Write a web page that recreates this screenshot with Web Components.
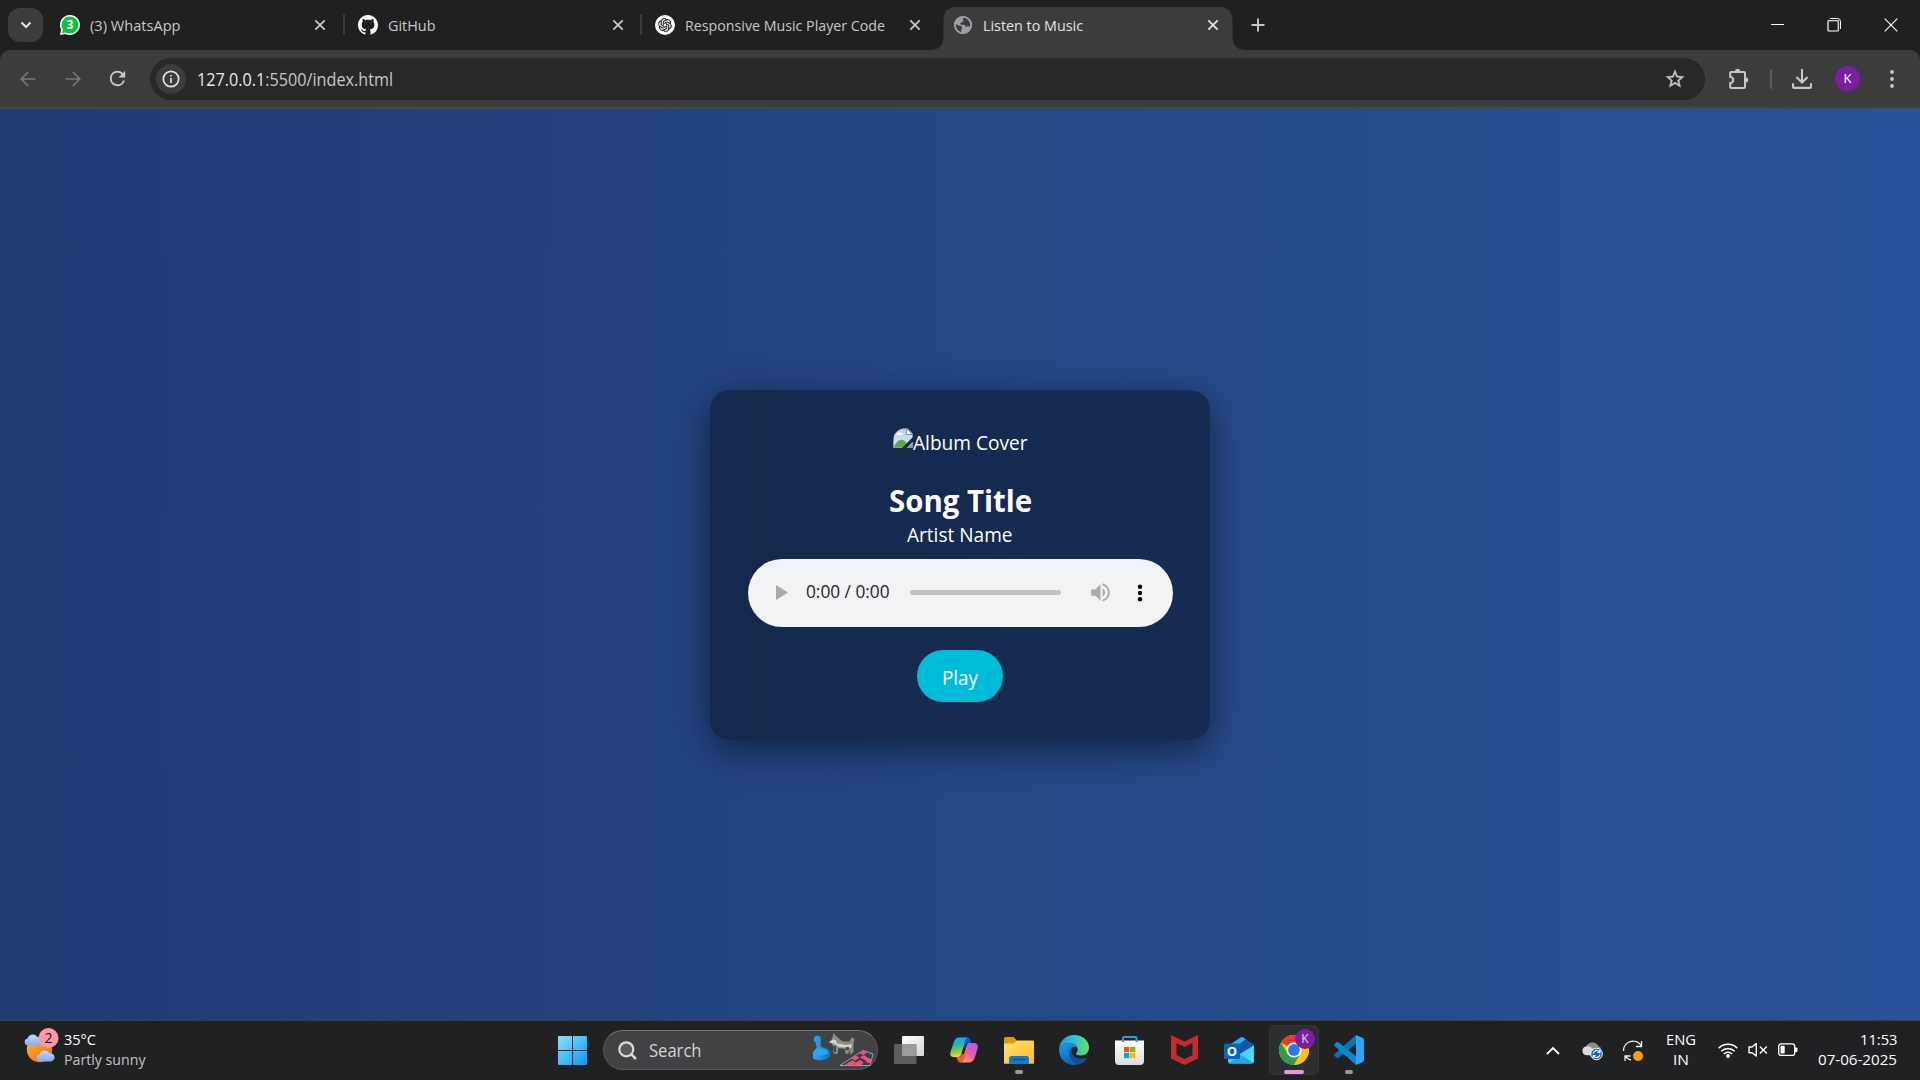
<!DOCTYPE html>
<html lang="en">
<head>
<meta charset="utf-8">
<title>Listen to Music</title>
<style>
html,body{margin:0;height:100%;overflow:hidden}
body{font-family:"Open Sans","Noto Sans",sans-serif;background:#1f2020;color:#fff}
</style>
</head>
<body>
<desktop-screen></desktop-screen>
<script>
const make = (tag, html, Base = HTMLElement) => customElements.define(tag, class extends Base {
  constructor() {
    super();
    this.attachShadow({ mode: 'open' });
    const t = document.createElement('template');
    t.innerHTML = html;
    this.shadowRoot.append(t.content.cloneNode(true));
  }
});

/* A line of text squeezed or stretched to an exact advance width. */
customElements.define('fit-text', class extends HTMLElement {
  constructor() {
    super();
    this.attachShadow({ mode: 'open' }).innerHTML = `<style>
      :host{display:inline-block;white-space:nowrap;flex:none}
      span{display:inline-block;transform-origin:0 50%}</style><span><slot></slot></span>`;
  }
  connectedCallback() {
    const s = this.shadowRoot.querySelector('span');
    const want = +this.getAttribute('w');
    requestAnimationFrame(() => this.fit(s, want));
    this.fit(s, want);
  }
  fit(s, want) {
    this.style.width = want + 'px';
    if (s.offsetWidth) {
      s.style.transform = 'none';
      s.style.transform = `scaleX(${want / s.getBoundingClientRect().width})`;
    }
  }
});

const svg = (w, h, body, vb = `0 0 ${w} ${h}`) => `<svg width="${w}" height="${h}" viewBox="${vb}" fill="none">${body}</svg>`;
const ICONS = {
  chevDown: svg(12, 8, '<path d="M1.500 1.500 6 6l4.500-4.500" stroke="#e3e3e3" stroke-width="2"/>'),
  close: svg(12, 12, '<path d="M1.300 1.300 10.700 10.700M10.700 1.300 1.300 10.700" stroke="currentColor" stroke-width="1.800"/>'),
  plus: svg(14, 14, '<path d="M7 .5v13M.5 7h13" stroke="#c7c7c7" stroke-width="1.900"/>'),
  whatsapp: svg(20, 20, '<path d="M10 0a10 10 0 1 1-4.600 18.900L0 20l1.100-5.300A10 10 0 0 1 10 0z" fill="#fff"/><path d="M10 1.500a8.500 8.500 0 1 1-4.200 15.900L2 18.200l.8-3.700A8.500 8.500 0 0 1 10 1.500z" fill="#12bf41"/><text x="10" y="14.300" font-family="Open Sans" font-weight="700" font-size="12" fill="#fff" text-anchor="middle">3</text>'),
  github: svg(20, 20, '<path fill="#fff" d="M8 0C3.580 0 0 3.580 0 8c0 3.540 2.290 6.530 5.470 7.590.4.07.55-.17.55-.38 0-.19-.01-.82-.01-1.490-2.010.37-2.530-.49-2.690-.94-.09-.23-.48-.94-.82-1.130-.28-.15-.68-.52-.01-.53.63-.01 1.080.58 1.230.82.72 1.210 1.870.87 2.330.66.07-.52.28-.87.51-1.070-1.780-.2-3.640-.89-3.640-3.950 0-.87.31-1.590.82-2.150-.08-.2-.36-1.020.08-2.120 0 0 .67-.21 2.200.82.64-.18 1.320-.27 2-.27s1.360.09 2 .27c1.530-1.040 2.200-.82 2.200-.82.44 1.100.16 1.920.08 2.120.51.56.82 1.270.82 2.150 0 3.070-1.870 3.750-3.650 3.950.29.25.54.73.54 1.480 0 1.070-.01 1.930-.01 2.200 0 .21.15.46.55.38A8.010 8.010 0 0 0 16 8c0-4.420-3.580-8-8-8z"/>', '0 0 16 16'),
  openai: svg(20, 20, '<circle cx="10" cy="10" r="10" fill="#fff"/><g transform="translate(3.200 3.200) scale(.567)"><path fill="#111" stroke="#111" stroke-width=".3" d="M22.2819 9.8211a5.9847 5.9847 0 0 0-.5157-4.9108 6.0462 6.0462 0 0 0-6.5098-2.9A6.0651 6.0651 0 0 0 4.9807 4.1818a5.9847 5.9847 0 0 0-3.9977 2.9 6.0462 6.0462 0 0 0 .7427 7.0966 5.98 5.98 0 0 0 .511 4.9107 6.051 6.051 0 0 0 6.5146 2.9001A5.9847 5.9847 0 0 0 13.2599 24a6.0557 6.0557 0 0 0 5.7718-4.2058 5.9894 5.9894 0 0 0 3.9977-2.9001 6.0557 6.0557 0 0 0-.7475-7.0729zm-9.022 12.6081a4.4755 4.4755 0 0 1-2.8764-1.0408l.1419-.0804 4.7783-2.7582a.7948.7948 0 0 0 .3927-.6813v-6.7369l2.02 1.1686a.071.071 0 0 1 .038.052v5.5826a4.504 4.504 0 0 1-4.4945 4.4944zm-9.6607-4.1254a4.4708 4.4708 0 0 1-.5346-3.0137l.142.0852 4.783 2.7582a.7712.7712 0 0 0 .7806 0l5.8428-3.3685v2.3324a.0804.0804 0 0 1-.0332.0615L9.74 19.9502a4.4992 4.4992 0 0 1-6.1408-1.6464zM2.3408 7.8956a4.485 4.485 0 0 1 2.3655-1.9728V11.6a.7664.7664 0 0 0 .3879.6765l5.8144 3.3543-2.0201 1.1685a.0757.0757 0 0 1-.071 0l-4.8303-2.7865A4.504 4.504 0 0 1 2.3408 7.872zm16.5963 3.8558L13.1038 8.364 15.1192 7.2a.0757.0757 0 0 1 .071 0l4.8303 2.7913a4.4944 4.4944 0 0 1-.6765 8.1042v-5.6772a.79.79 0 0 0-.407-.667zm2.0107-3.0231l-.142-.0852-4.7735-2.7818a.7759.7759 0 0 0-.7854 0L9.409 9.2297V6.8974a.0662.0662 0 0 1 .0284-.0615l4.8303-2.7866a4.4992 4.4992 0 0 1 6.6802 4.66zM8.3065 12.863l-2.02-1.1638a.0804.0804 0 0 1-.038-.0567V6.0742a4.4992 4.4992 0 0 1 7.3757-3.4537l-.142.0805L8.704 5.459a.7948.7948 0 0 0-.3927.6813zm1.0976-2.3654l2.602-1.4998 2.6069 1.4998v2.9994l-2.5974 1.4997-2.6067-1.4997Z"/></g>'),
  globe: svg(20, 20, '<circle cx="10" cy="10" r="9" fill="#9aa0a6"/><path d="M11 2.600c-1.200.6-1.400 1.700-.7 2.500.7.700.3 1.600-.8 1.600-1 0-.9 1-1.700 1.300-1.200.3-.6 1.700.4 1.700h2.600c1 0 1.500.7 1.500 1.500s1 .7 1.600.3c.8-.6 2-.3 3 .2 1-3.600-1-7.800-5.900-9.100z" fill="#3c3c3c"/><path d="M2.700 9.300c1.300.2 2.600 1.300 3.900 1.400 1.600.1 2.500.8 2.500 2 0 1-.9 1.200-.9 2.100v2.400C4.800 16.300 2.500 13 2.700 9.300z" fill="#3c3c3c"/><circle cx="10" cy="10" r="8.200" stroke="#9aa0a6" stroke-width="1.600"/>'),
  min: svg(13, 13, '<path d="M1 5.500h13" stroke="#fff" stroke-width="1"/>'),
  restore: svg(14, 14, '<path d="M3 .5h7.500a3 3 0 0 1 3 3V11" stroke="#fff"/><rect x="1" y="2.500" width="10.500" height="10.500" rx="1" stroke="#fff" stroke-width="1.200"/><path d="M1.500 3H11v9.500" stroke="#999" stroke-width="1"/>'),
  wclose: svg(14, 14, '<path d="M.7.700 13.300 13.300M13.300.7.700 13.300" stroke="#fff" stroke-width="1.100"/>'),
  back: svg(16, 16, '<path d="M15.500 8H1.700M8.200 1 1.200 8l7 7" stroke="#777" stroke-width="1.700"/>'),
  fwd: svg(16, 16, '<path d="M.5 8h13.800M7.800 1l7 7-7 7" stroke="#777" stroke-width="1.700"/>'),
  reload: svg(23, 23, '<path fill="#c7c7c7" d="M17.650 6.350A7.958 7.958 0 0 0 12 4a8 8 0 1 0 7.730 10h-2.080A6 6 0 1 1 12 6c1.660 0 3.140.69 4.220 1.780L13 11h7V4l-2.350 2.350z"/>', '0 0 24 24'),
  info: svg(18, 18, '<circle cx="9" cy="9" r="7.700" stroke="#e3e3e3" stroke-width="1.700"/><path d="M9 8v5" stroke="#e3e3e3" stroke-width="1.700"/><path d="M9 4.900v1.700" stroke="#e3e3e3" stroke-width="1.700"/>'),
  star: svg(22, 22, '<path fill="#c7c7c7" stroke="#c7c7c7" stroke-width=".4" d="M22 9.240l-7.190-.62L12 2 9.190 8.630 2 9.240l5.460 4.730L5.820 21 12 17.270 18.180 21l-1.630-7.030L22 9.240zM12 15.400l-3.760 2.270 1-4.280-3.320-2.880 4.380-.38L12 6.100l1.710 4.040 4.380.38-3.320 2.880 1 4.280L12 15.400z"/>', '0 0 24 24'),
  puzzle: svg(24, 24, '<path d="M5.200 5H18a1 1 0 0 1 1 1V20a1 1 0 0 1-1 1H5.200a1 1 0 0 1-1-1V16.200c4-.7 4-5.700 0-6.400V6a1 1 0 0 1 1-1z" stroke="#c7c7c7" stroke-width="2"/><path d="M9.200 4.500a2.400 2.400 0 0 1 4.800 0zM19.500 10.400a2.500 2.500 0 0 1 0 5z" fill="#c7c7c7" stroke="#c7c7c7" stroke-width=".5"/>'),
  download: svg(20, 20, '<path d="M10 0v13M4.400 8 10 13.600 15.600 8M1 14.200v3.500a1.200 1.200 0 0 0 1.200 1.200h15.600a1.200 1.200 0 0 0 1.200-1.200v-3.500" stroke="#c7c7c7" stroke-width="2.100"/>'),
  dots: svg(6, 18, '<g fill="#c7c7c7"><circle cx="3" cy="2" r="1.900"/><circle cx="3" cy="9" r="1.900"/><circle cx="3" cy="16" r="1.900"/></g>'),
  broken: svg(20, 20, '<defs><clipPath id="c"><path d="M0 20V13A13 13 0 0 1 13 0H14L20 6V20z"/></clipPath><linearGradient id="g" x2="0" y2="1"><stop stop-color="#b9cdf2"/><stop offset="1" stop-color="#d9e6fb"/></linearGradient></defs><g clip-path="url(#c)"><rect width="20" height="20" fill="#9a9a9a"/><rect x="1" y="1" width="18" height="18" fill="url(#g)"/><path d="M3 7q2-4 5-2 2 0 2 2z" fill="#fff"/><path d="M1 19c2-6 7-9 11-6l4 6z" fill="#58ad35"/><path d="M20 9v4.500L13.500 20H9z" fill="#162a4f"/><path d="M20 14v6h-6z" fill="#8ea08b"/></g><path d="M13.300.5v6H19.500z" fill="#fff" stroke="#8b8b8b"/>'),
  aplay: svg(12, 15, '<path d="M0 0 12 7.500 0 15z" fill="#a9aaaa"/>'),
  vol: svg(25, 25, '<path fill="#a9aaaa" d="M3 9v6h4l5 5V4L7 9H3zm13.500 3A4.500 4.500 0 0 0 14 7.970v8.050A4.500 4.500 0 0 0 16.500 12zM14 3.230v2.060a7 7 0 0 1 0 13.420v2.060A9 9 0 0 0 14 3.230z"/>', '0 0 24 24'),
  adots: svg(6, 18, '<g fill="#000"><circle cx="3" cy="2.700" r="2.200"/><circle cx="3" cy="9" r="2.200"/><circle cx="3" cy="15.300" r="2.200"/></g>'),
  weather: svg(36, 38, '<defs><linearGradient id="s" x1="0" y1="0" x2=".8" y2="1"><stop stop-color="#f6c33c"/><stop offset="1" stop-color="#f26a0c"/></linearGradient><linearGradient id="c" x2="0" y2="1"><stop stop-color="#c3d9fb"/><stop offset="1" stop-color="#84abee"/></linearGradient></defs><circle cx="15.500" cy="21.500" r="12.700" fill="url(#s)"/><path d="M4 17.500a3.600 3.600 0 0 1-.5-7.100 5.600 5.600 0 0 1 10.200-1.200A4.200 4.200 0 0 1 17 17.500z" fill="url(#c)"/><path d="M16 33.500a3.600 3.600 0 0 1-.5-7.100 5.600 5.600 0 0 1 10.200-1.200A4.200 4.200 0 0 1 27 33.500z" fill="url(#c)"/><circle cx="24.500" cy="10" r="10" fill="#fd99a3"/><text x="24.500" y="15.200" font-family="Open Sans" font-size="14" fill="#1b1b1b" text-anchor="middle">2</text>'),
  start: svg(29, 29, '<defs><linearGradient id="g" x2="1" y2="1"><stop stop-color="#8be0ff"/><stop offset=".55" stop-color="#3cbcfb"/><stop offset="1" stop-color="#0a95f5"/></linearGradient></defs><path fill="url(#g)" d="M1 0H14V14H0V1a1 1 0 0 1 1-1zM15 0h13a1 1 0 0 1 1 1v13H15zM0 15h14v14H1a1 1 0 0 1-1-1zM15 15h14v13a1 1 0 0 1-1 1H15z"/>'),
  mag: svg(19, 19, '<circle cx="8.300" cy="8.300" r="7" stroke="#d9dbdc" stroke-width="2.200" fill="#5a5b5d"/><path d="M13.300 13.300 18 18" stroke="#d9dbdc" stroke-width="2.600"/>'),
  toys: svg(60, 34, '<defs><linearGradient id="b"><stop stop-color="#2aa9f8"/><stop offset="1" stop-color="#0b72c8"/></linearGradient></defs><path d="M1 7.500A3.700 3.700 0 1 1 8 7.500C7.500 9 7.600 12 8.500 14.500 13 14.500 17.300 16.500 17.300 19.500V22.500C15 28 3 28.500 0 25V19.500L3.500 15C3.500 12 3 9.500 1 7.500z" fill="url(#b)"/><path d="M0 19.500C2 16.500 4 15.500 6 15.500c5 0 9 1.500 9 4s-9 4.500-15 1.500z" fill="#2ea4f3"/><path d="M15 10 19 6 20.500 0l2.500 3 4 3.500 3 2h6.500L39 4l2.500 2-1 4.500v8l-3 3.500-.5-5-2 4-3-.5.5-4.500-7-1-1 6-4-.5-.5-7.500-2-4z" fill="#8d8d86"/><path d="M16 9.500 20 6.500l3 1 1 3 10 1.500 5-1-1 4-12-1-4-3z" fill="#d3d3cc"/><path d="M20 13h3v6h-2zM33 14h3v3h-3z" fill="#45453f"/><path d="M27 32.500 50 17.500l10 3.500L57 32.500z" fill="#343a62" stroke="#cfc5d2" stroke-width=".7"/><g fill="#f4516c"><path d="m38 25.500 4.500-3 4 2-4 3zM46 20l4-2.200 4 1.700-3.500 2.500zM47 24.500l3.600-2.500 3.900 2.500-2.500 2.500zM35 29.800l4.500-2.500 3.500 2.200-4 3H31zM43 29.500l4-2.500 3.600 2.500-2.600 3h-8zM52 27l2.500-2.500 4 2-1 3.500h-3z"/></g>'),
  taskview: svg(30, 28, '<defs><linearGradient id="g" x2="1" y2="1"><stop stop-color="#fff"/><stop offset="1" stop-color="#d6d6d6"/></linearGradient></defs><rect x="8" width="22" height="20" rx="1" fill="url(#g)"/><rect y="8" width="22.500" height="20" rx="1" fill="#6e6e6e" fill-opacity=".8"/><rect x="8" y="8" width="14.500" height="12" fill="#9b9b9b"/>'),
  copilot: svg(28, 26, '<defs><linearGradient id="a" x2=".2" y2="1"><stop stop-color="#1f9cf0"/><stop offset=".45" stop-color="#27b5b5"/><stop offset=".75" stop-color="#8fc93a"/><stop offset="1" stop-color="#f2d33b"/></linearGradient><linearGradient id="b" x1=".8" x2=".2" y2="1"><stop stop-color="#a45cf0"/><stop offset=".5" stop-color="#ee5ba8"/><stop offset="1" stop-color="#ffa05c"/></linearGradient><linearGradient id="d" x2="1"><stop stop-color="#1b7ce0"/><stop offset="1" stop-color="#1742c4"/></linearGradient></defs><path d="M18 6h5.500c3.500 0 5 2 4.200 5L25 20c-1 3.500-3 5.500-6.500 5.500H9c2.500 0 3.300-1.500 4-4L16 10z" fill="url(#b)"/><path d="M9 .5h8.500c2 0 2.800 1.500 3.500 4L21.500 6H19c-2.500 0-3.500 1.500-4 3l-1 3z" fill="url(#d)"/><path d="M9 .5c-3 0-4.500 2-5.300 5L.5 15c-1 3.500.5 5 3.500 5h4c2 0 3-1.500 3.500-3.500l3-11c.8-3 1.500-5 4-5z" fill="url(#a)"/><path d="M8.500 20c2 0 2.800-1 3.500-3h3.500l-1.300 4.500c-.7 2.500-2 4-4 4-1.500 0-2.200-1-2.700-2.500L6.500 20z" fill="#f15a3a"/>'),
  explorer: svg(30, 27, '<defs><linearGradient id="g" x2="1" y2="1"><stop stop-color="#ffe07a"/><stop offset="1" stop-color="#fdbc1b"/></linearGradient></defs><path d="M0 1.500A1.500 1.500 0 0 1 1.500 0H9.500L13 3.500V9H0z" fill="#dd9b09"/><path d="M0 6.500H9.500L13 3.500H29a1 1 0 0 1 1 1V26a.8.800 0 0 1-.8.800H.8A.8.800 0 0 1 0 26z" fill="url(#g)"/><path d="M5 27V21.500a2.500 2.500 0 0 1 2.500-2.500h15a2.500 2.500 0 0 1 2.500 2.500V27z" fill="#127bcd"/><path d="M9 22.500h12" stroke="#0b4f8c" stroke-width="1.300" stroke-linecap="round"/>'),
  edge: svg(30, 30, '<defs><linearGradient id="a" x1="0" y1=".4" x2="1" y2=".4"><stop stop-color="#2196e3"/><stop offset=".5" stop-color="#31c0d8"/><stop offset="1" stop-color="#6ae05a"/></linearGradient><linearGradient id="b" x2=".4" y2="1"><stop stop-color="#1aa0e8"/><stop offset="1" stop-color="#0c62b5"/></linearGradient></defs><path d="M0 14C.5 6 7 0 15 0c9 0 15 6 15 12.500 0 5-3.500 8-8 8-3.500 0-5-1-5-2 0-.8 1.700-1.500 1.700-4C18.700 11 15 8 10.500 8 5 8 1 11 0 14z" fill="url(#a)"/><path d="M0 14.500C1 10.500 5.500 8 10 8c3.500 0 7 1.500 8.200 4.500-4-1.500-7.700.8-7.700 5C10.500 24 16 29 21.500 28.300 19.500 29.500 17.500 30 15 30 6.500 30 0 23.500 0 14.500z" fill="url(#b)"/><path d="M13.200 12.700C9 15 9.500 23 14 26.500c5 4 10.500 2.500 13.800-3 .4-.8-.2-1-.8-.7-2 1-4.500 1.300-7 .8-5.500-1-9-6-6.800-10.900z" fill="#114f9c"/>'),
  store: svg(29, 29, '<defs><linearGradient id="g" x2="0" y2="1"><stop stop-color="#fff"/><stop offset="1" stop-color="#dcdcdc"/></linearGradient></defs><path d="M0 4.500H29V25a4 4 0 0 1-4 4H4a4 4 0 0 1-4-4z" fill="url(#g)"/><path d="M8 6V2a1 1 0 0 1 1-1H20.500a1 1 0 0 1 1 1V6" stroke="#20a4df" stroke-width="2"/><path d="M9 11h5.300v5.200H9z" fill="#f1511b"/><path d="M15 11h5.300v5.200H15z" fill="#80bb03"/><path d="M9 17h5.300v5.200H9z" fill="#00a3ee"/><path d="M15 17h5.300v5.200H15z" fill="#feb801"/>'),
  mcafee: svg(27, 30, '<path fill="#c32b2d" fill-rule="evenodd" d="M0 0 13.500 6.500 27 0V23.500L13.500 30 0 23.500zM5.500 8V20l8 4 8-4V8l-8 4z"/>'),
  outlook: svg(30, 27, '<defs><linearGradient id="g" x2="1" y2="1"><stop stop-color="#36c8f2"/><stop offset="1" stop-color="#5ce0fb"/></linearGradient></defs><path d="M4 9 17 .3a1.500 1.500 0 0 1 1.600 0L30 8V11L12 22H4z" fill="#1278d0"/><path d="M6 7.700 17 .3a1.500 1.500 0 0 1 1.600 0L22 2.600 10 10z" fill="#2fb0ee"/><path d="M22 2.600 30 8 14 18V8z" fill="#0f56ac"/><path d="M29.900 8.500V24a2.500 2.500 0 0 1-2.500 2.500H6.500A2.500 2.500 0 0 1 4 24V21l11-3.500z" fill="url(#g)"/><path d="M4.500 26 17 18l12 7.500a2.500 2.500 0 0 1-1.600 1H6.500a2.500 2.500 0 0 1-2-.5z" fill="#22a7e8"/><rect y="6.500" width="16" height="15.500" rx="1.500" fill="#0a64bd"/><text x="8" y="19" font-family="Open Sans" font-weight="700" font-size="13" fill="#fff" text-anchor="middle">O</text>'),
  chrome: svg(30, 30, '<circle cx="15" cy="15" r="15" fill="#fbc116"/><path d="M15 15 2 7.500A15 15 0 0 1 28 7.500H15z" fill="#e33b2e"/><path d="M2 7.500A15 15 0 0 0 15 30L21.500 18.700 15 15 8.500 18.700z" fill="#2d9d4c"/><path d="M28 7.500A15 15 0 0 1 15 30L21.500 18.700 20 7.500z" fill="#fbc116"/><circle cx="15" cy="15" r="7.500" fill="#fff"/><circle cx="15" cy="15" r="5.900" fill="#2f78ea"/>'),
  vscode: svg(30, 30, '<path d="M22 0 22.500 8.500 4.500 22.700a1.500 1.500 0 0 1-1.900 0L.6 20.900a1.300 1.300 0 0 1 0-1.900z" fill="#0b72b9"/><path d="M22 30 22.500 21.500 4.500 7.300a1.500 1.500 0 0 0-1.900 0L.6 9.100a1.300 1.300 0 0 0 0 1.900z" fill="#0f86d2"/><path d="M22 0 29 3a1.500 1.500 0 0 1 1 1.400V25.600A1.500 1.500 0 0 1 29 27L22 30z" fill="#29a7f1"/>'),
  up: svg(14, 9, '<path d="M1 8 7 2l6 6" stroke="#fff" stroke-width="1.900"/>'),
  onedrive: svg(22, 18, '<path d="M4.500 13A4.500 4.500 0 0 1 4 4.600 7 7 0 0 1 16.500 4 5 5 0 0 1 17 13z" fill="#8c8c8c"/><path d="M4.500 13.200A4.400 4.400 0 0 1 4 4.500c3.500-.7 6 1 8 3.500l-1 5.200z" fill="#dadada"/><circle cx="14.500" cy="12" r="5.800" fill="#1464b4" stroke="#fff" stroke-width="1"/><path d="M11.200 11.500a3.500 3.500 0 0 1 6.300-1.500M17.900 12.500a3.500 3.500 0 0 1-6.300 1.500M17.900 8v2.500h-2.500M11.200 16v-2.500h2.500" stroke="#fff" stroke-width="1.200"/>'),
  sync: svg(22, 22, '<path d="M1.500 11A9.500 9.500 0 0 1 19 5.500M19.500 1v5.500h-5.500M3 21V16H8.500M3.500 16.500a9.500 9.500 0 0 0 5.500 3.500" stroke="#f0f0f0" stroke-width="1.300"/><circle cx="16" cy="16" r="5" fill="#ff9b0c"/>'),
  wifi: svg(20, 15, '<g stroke="#fff" stroke-width="1.500"><path d="M.7 5.200a13.200 13.200 0 0 1 18.600 0M3.300 8.200a9.500 9.500 0 0 1 13.400 0M5.900 11a5.800 5.800 0 0 1 8.200 0"/></g><circle cx="10" cy="13" r="1.900" fill="#fff"/>'),
  mute: svg(20, 16, '<path d="M1 5v5.800h3L8.300 14V1.500L4 5z" stroke="#fff" stroke-width="1.400" stroke-linejoin="round"/><path d="m11.800 4.500 7 7M18.800 4.500l-7 7" stroke="#fff" stroke-width="1.300"/>'),
  battery: svg(20, 14, '<rect x=".7" y=".9" width="16" height="11.500" rx="2.500" stroke="#fff" stroke-width="1.300"/><rect x="2.500" y="2.800" width="4.200" height="7.700" rx="1" fill="#fff"/><path d="M17 4.500h1.300a1.200 1.200 0 0 1 1.200 1.200v2a1.200 1.200 0 0 1-1.200 1.200H17z" fill="#fff"/>'),
};
customElements.define('ui-icon', class extends HTMLElement {
  connectedCallback() {
    if (this.shadowRoot) return;
    this.attachShadow({ mode: 'open' }).innerHTML =
      `<style>:host{display:block;flex:none}svg{display:block;overflow:visible}</style>${ICONS[this.getAttribute('name')]}`;
  }
});

/* ---------- browser ---------- */
make('browser-tab', `<style>
:host{display:flex;align-items:center;box-sizing:border-box;width:297.500px;height:50px;padding:0 23.500px 0 13px;flex:none;position:relative;font-size:15px;line-height:20px;color:#c7c7c7}
.t{flex:1;margin-left:10px;display:flex}
.sep{position:absolute;right:0;top:14px;width:2px;height:21px;background:#3c3c3c;border-radius:1px;display:none}
:host([sep]) .sep{display:block}
.bg{position:absolute;left:-9px;top:7px;display:none}
:host([active]){color:#e3e3e3}
:host([active]) .bg{display:block}
::slotted(*),.t,.x{z-index:1}
.x{width:12px;margin-right:-5.300px}
</style>
<svg class="bg" width="314" height="43" viewBox="0 0 314 43"><path d="M0 43C8 43 12.500 38 12.500 31V13C12.500 5 17 0 25 0H289C297 0 301.500 5 301.500 13V31C301.500 38 306 43 314 43z" fill="#3c3c3c"/></svg>
<slot name="icon"></slot><div class="t"><slot></slot></div><ui-icon class="x" name="close"></ui-icon><i class="sep"></i>`);

make('tab-strip', `<style>
:host{display:flex;height:50px;background:#1f2120;padding-left:8px;box-sizing:border-box;align-items:center}
.menu{width:35px;height:34px;border-radius:12px;background:#3c3c3c;display:grid;place-items:center;margin-right:4px}
.plus{width:41px;display:grid;place-items:center}
.win{margin-left:auto;display:flex}
.win div{width:57.500px;display:grid;place-items:center}
</style>
<div class="menu"><ui-icon name="chevDown"></ui-icon></div>
<browser-tab sep><ui-icon slot="icon" name="whatsapp"></ui-icon><fit-text w="90.5">(3) WhatsApp</fit-text></browser-tab>
<browser-tab sep><ui-icon slot="icon" name="github"></ui-icon><fit-text w="47.5">GitHub</fit-text></browser-tab>
<browser-tab><ui-icon slot="icon" name="openai"></ui-icon><fit-text w="200">Responsive Music Player Code</fit-text></browser-tab>
<browser-tab active><ui-icon slot="icon" name="globe"></ui-icon><fit-text w="100">Listen to Music</fit-text></browser-tab>
<div class="plus"><ui-icon name="plus"></ui-icon></div>
<div class="win"><div><ui-icon name="min"></ui-icon></div><div><ui-icon name="restore"></ui-icon></div><div><ui-icon name="wclose"></ui-icon></div></div>`);

make('address-bar', `<style>
:host{display:flex;align-items:center;box-sizing:border-box;width:1555px;height:42px;border-radius:21px;background:#282828;padding:0 19px 0 6px;font-size:17.500px;line-height:24px;color:#c7c7c7}
.i{width:30px;height:30px;border-radius:50%;background:#3c3c3c;display:grid;place-items:center;margin-right:10.500px}
b{font-weight:400;color:#e8e8e8}
.s{margin-left:auto}
</style><div class="i"><ui-icon name="info"></ui-icon></div><fit-text w="196">
<b>127.0.0.1</b>:5500/index.html</fit-text><ui-icon class="s" name="star"></ui-icon>`);

make('tool-bar', `<style>
:host{display:block;background:#1f2120}
.in{display:flex;align-items:center;height:59px;box-sizing:border-box;padding-left:5px;border-bottom:2px solid #474747;background:#3c3c3c;border-radius:10px 10px 0 0}
.n{width:45px;display:grid;place-items:center}
address-bar{margin-left:10px}
.p{width:66px;display:grid;place-items:center}
.sep{width:2px;height:20px;background:#5c5c5c;border-radius:1px;margin:0 20px 0 -1px}
.k{width:25px;height:25px;border-radius:50%;background:#7b1fa2;margin:0 29px 0 23px;font-size:13px;line-height:25px;text-align:center;color:#fff}
</style><div class="in"><div class="n"><ui-icon name="back"></ui-icon></div><div class="n"><ui-icon name="fwd"></ui-icon></div><div class="n"><ui-icon name="reload"></ui-icon></div>
<address-bar></address-bar><div class="p"><ui-icon name="puzzle"></ui-icon></div><i class="sep"></i><ui-icon name="download"></ui-icon><div class="k">K</div><ui-icon name="dots"></ui-icon></div>`);

/* ---------- player page ---------- */
make('audio-bar', `<style>
:host{display:flex;align-items:center;box-sizing:border-box;width:425px;height:68px;border-radius:34px;background:#f1f3f4;padding:0 30px 0 28px;color:#252525;font-size:17.500px;line-height:24px}
.tr{width:151.500px;height:5px;border-radius:3px;background:#c1c2c3;margin:0 27px 0 20.500px}
fit-text{margin:-3px 0 0 18.500px}
ui-icon.d{margin-left:24px}
</style><ui-icon name="aplay"></ui-icon><fit-text w="83.5">0:00 / 0:00</fit-text><div class="tr"></div><ui-icon name="vol"></ui-icon><ui-icon class="d" name="adots"></ui-icon>`);

make('player-card', `<style>
:host{display:flex;flex-direction:column;align-items:center;box-sizing:border-box;width:500px;height:350px;padding-top:38px;border-radius:20px;background:rgba(0,0,0,.4);box-shadow:0 10px 37px rgba(0,0,0,.5);font-size:20px}
.alt{display:flex;height:28px;line-height:28px}
.alt fit-text{margin-top:1.500px}
h2{margin:25.500px 0 0;font-size:30px;line-height:40px;height:40px}
p{margin:0;height:28px;line-height:28px}
audio-bar{margin-top:9.500px}
button{margin:23px 0 0;width:86px;height:52px;border:0;padding:5px 0 0;border-radius:26px;background:#00bcd8;color:#fff;font:20px/28px "Open Sans",sans-serif}
</style><div class="alt"><ui-icon name="broken"></ui-icon><fit-text w="114.5">Album Cover</fit-text></div>
<h2><fit-text w="143">Song Title</fit-text></h2><p><fit-text w="105.5">Artist Name</fit-text></p>
<audio-bar></audio-bar><button><fit-text w="36">Play</fit-text></button>`);

make('music-page', `<style>:host{display:flex;align-items:center;justify-content:center;flex:1;background:linear-gradient(to right,#1e3c72,#2a5298)}</style><slot></slot>`);

/* ---------- taskbar ---------- */
make('task-app', `<style>
:host{display:grid;place-items:center;width:55px;height:50px;position:relative;flex:none}
:host([run])::after{content:"";position:absolute;left:23.500px;bottom:1.500px;width:8px;height:4px;border-radius:2px;background:#9a9a9a}
:host([active])::before{content:"";position:absolute;left:2.500px;top:-.5px;width:48px;height:48px;border-radius:6px;background:#2d2e30;border:1px solid #36373a}
:host([active])::after{width:20px;left:17.500px;background:#dd9ce0}
::slotted(*){z-index:1}
::slotted(.e){margin-top:-1px}
::slotted(.k){position:absolute;left:28.500px;top:3.500px;width:20px;height:20px;border-radius:50%;background:#7b1fa2;color:#e6d3ee;font-size:12px;line-height:20px;text-align:center}
</style><slot></slot>`);

make('search-pill', `<style>
:host{display:flex;align-items:center;box-sizing:border-box;width:275px;height:40px;border-radius:20px;background:#414244;border:1px solid #56575a;border-top-color:#77787b;padding:0 4px 0 14px;margin:-1px 3.500px 0;font-size:17.500px;line-height:24px;color:#d3d4d5}
fit-text{margin-left:12px}.t{margin-left:auto}
</style><ui-icon name="mag"></ui-icon><fit-text w="52.5">Search</fit-text><ui-icon class="t" name="toys"></ui-icon>`);

make('sys-tray', `<style>
:host{display:flex;align-items:center;margin-left:auto;padding-right:23px;font-size:15px;line-height:20px}
.c{width:40px;display:grid;place-items:center}
.l{width:56px;text-align:center;margin:-4px 4px 0 0}
.s{width:30px;display:grid;place-items:center}
.s ui-icon{margin-top:-1px}
.d{width:94px;text-align:right;margin-top:-4px}
.l fit-text,.d fit-text{display:block;margin:0 auto}.d fit-text{margin-right:0;text-align:left}
.l fit-text{text-align:left}
</style><div class="c"><ui-icon name="up"></ui-icon></div><div class="c"><ui-icon name="onedrive"></ui-icon></div><div class="c"><ui-icon name="sync"></ui-icon></div>
<div class="l"><fit-text w="30">ENG</fit-text><fit-text w="16">IN</fit-text></div>
<div class="s"><ui-icon name="wifi"></ui-icon></div><div class="s"><ui-icon name="mute"></ui-icon></div><div class="s"><ui-icon name="battery"></ui-icon></div>
<div class="d"><fit-text w="37.5">11:53</fit-text><fit-text w="79">07-06-2025</fit-text></div>`);

make('task-bar', `<style>
:host{display:flex;align-items:center;box-sizing:border-box;height:60px;background:#202123;border-top:1px solid #3d3e3f;flex:none}
.w{display:flex;width:544.500px;box-sizing:border-box;padding-left:24px;font-size:15px;line-height:20px;align-items:center}
.w div{margin:-4px 0 0 4px;display:flex;flex-direction:column}
.w .g{color:#c4c4c4}
.w ui-icon{margin-top:-7px}
</style><div class="w"><ui-icon name="weather"></ui-icon><div><fit-text w="32">35°C</fit-text><fit-text class="g" w="81.5">Partly sunny</fit-text></div></div>
<task-app><ui-icon name="start"></ui-icon></task-app><search-pill></search-pill>
<task-app><ui-icon name="taskview" class="e"></ui-icon></task-app><task-app><ui-icon name="copilot" class="e"></ui-icon></task-app>
<task-app run><ui-icon name="explorer"></ui-icon></task-app><task-app><ui-icon name="edge" class="e"></ui-icon></task-app>
<task-app><ui-icon name="store"></ui-icon></task-app><task-app><ui-icon name="mcafee" class="e"></ui-icon></task-app>
<task-app><ui-icon name="outlook"></ui-icon></task-app><task-app run active><ui-icon name="chrome" class="e"></ui-icon><span class="k">K</span></task-app>
<task-app run><ui-icon name="vscode" class="e"></ui-icon></task-app><sys-tray></sys-tray>`);

make('desktop-screen', `<style>:host{display:flex;flex-direction:column;width:1920px;height:1080px;overflow:hidden}</style>
<tab-strip></tab-strip><tool-bar></tool-bar><music-page><player-card></player-card></music-page><task-bar></task-bar>`);
</script>
</body>
</html>
